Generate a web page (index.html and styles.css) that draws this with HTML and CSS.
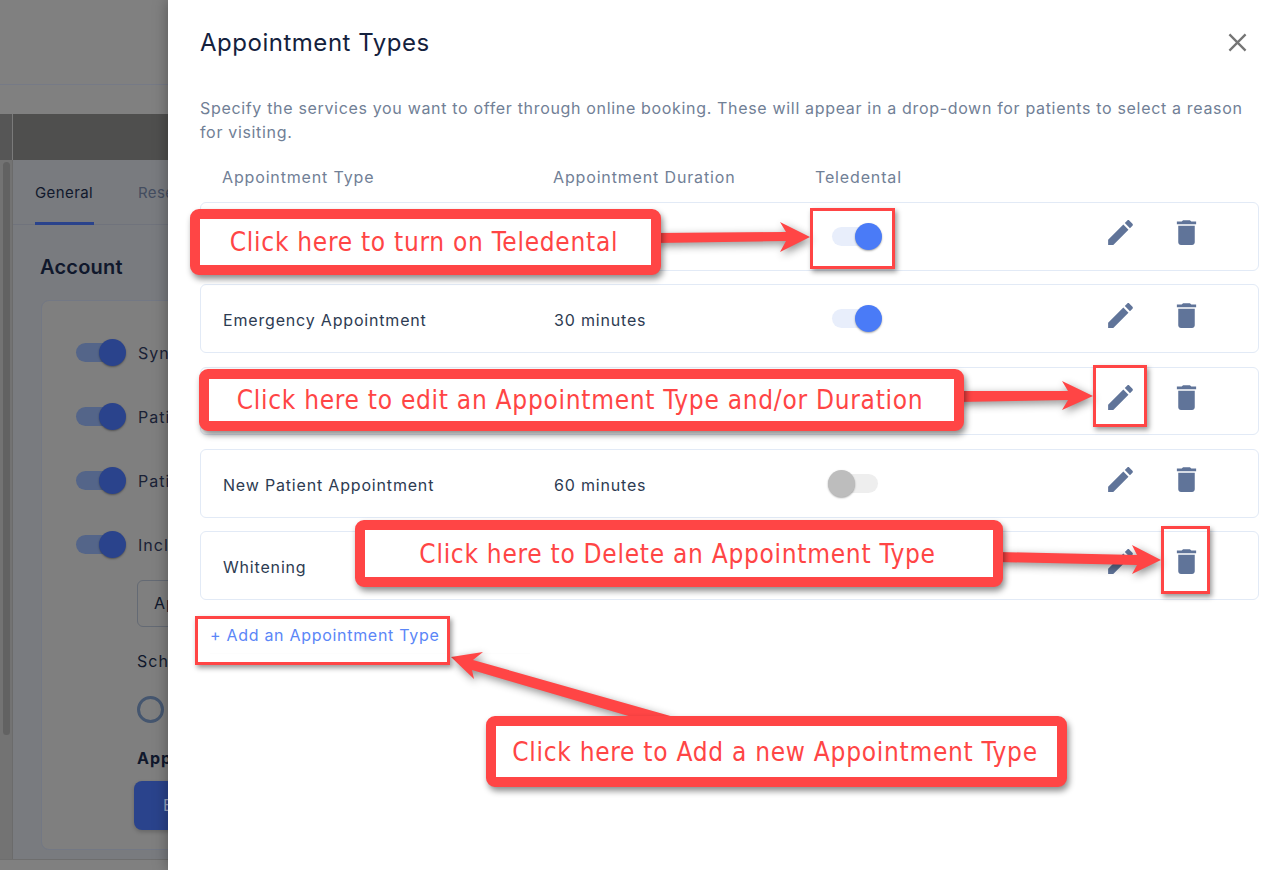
FILE: index.html
```html
<!DOCTYPE html>
<html lang="en">
<head>
<meta charset="utf-8">
<title>Appointment Types</title>
<link rel="stylesheet" href="styles.css">
</head>
<body>
<div class="page">
  <div class="backdrop" aria-hidden="true">
    <div class="bg-head"></div>
    <div class="bg-strip"></div>
    <div class="bg-bar"><div class="bg-bar-rail"></div></div>
    <div class="bg-main">
      <div class="bg-rail"><div class="bg-thumb"></div></div>
      <div class="bg-content">
        <div class="bg-tabs">
          <span class="bg-tab bg-tab-active">General</span>
          <span class="bg-tab">Reservations</span>
        </div>
        <div class="bg-section">Account</div>
        <div class="bg-card">
          <div class="bg-setting"><span class="bg-switch"></span><span>Sync appointments</span></div>
          <div class="bg-setting"><span class="bg-switch"></span><span>Patient reminders</span></div>
          <div class="bg-setting"><span class="bg-switch"></span><span>Patient forms</span></div>
          <div class="bg-setting"><span class="bg-switch"></span><span>Include</span></div>
          <div class="bg-input">Appointment</div>
          <div class="bg-label">Schedule</div>
          <div class="bg-radio"></div>
          <div class="bg-strong">Appointment</div>
          <div class="bg-button">Edit</div>
        </div>
      </div>
    </div>
  </div>

  <main class="drawer">
    <header class="drawer-head">
      <h1 class="drawer-title">Appointment Types</h1>
      <svg class="close" viewBox="0 0 20 20"><path d="M1.5 1.5l17 17M18.500 1.500l-17 17"/></svg>
    </header>
    <p class="intro">Specify the services you want to offer through online booking. These will appear in a drop-down for patients to select a reason for visiting.</p>
    <div class="cols">
      <span class="col-name">Appointment Type</span>
      <span class="col-dur-head">Appointment Duration</span>
      <span>Teledental</span>
    </div>
    <div class="rows">
      <div class="row">
        <span class="col-name"></span><span class="col-dur"></span>
        <span class="toggle"></span>
        <svg class="icon icon-edit" viewBox="0 0 24 24"><path d="M3 17.250V21h3.750L17.810 9.940l-3.750-3.750L3 17.250zM20.710 7.040c.39-.39.39-1.020 0-1.410l-2.340-2.340c-.39-.39-1.020-.39-1.410 0l-1.830 1.830 3.750 3.750 1.830-1.830z"/></svg>
        <svg class="icon" viewBox="0 0 24 24"><path d="M6 19c0 1.100.9 2 2 2h8c1.100 0 2-.9 2-2V7H6v12zM19 4h-3.500l-1-1h-5l-1 1H5v2h14V4z"/></svg>
      </div>
      <div class="row">
        <span class="col-name">Emergency Appointment</span><span class="col-dur">30 minutes</span>
        <span class="toggle"></span>
        <svg class="icon icon-edit" viewBox="0 0 24 24"><path d="M3 17.250V21h3.750L17.810 9.940l-3.750-3.750L3 17.250zM20.710 7.040c.39-.39.39-1.020 0-1.410l-2.340-2.340c-.39-.39-1.020-.39-1.410 0l-1.830 1.830 3.750 3.750 1.830-1.830z"/></svg>
        <svg class="icon" viewBox="0 0 24 24"><path d="M6 19c0 1.100.9 2 2 2h8c1.100 0 2-.9 2-2V7H6v12zM19 4h-3.500l-1-1h-5l-1 1H5v2h14V4z"/></svg>
      </div>
      <div class="row">
        <span class="col-name"></span><span class="col-dur"></span>
        <span class="toggle"></span>
        <svg class="icon icon-edit" viewBox="0 0 24 24"><path d="M3 17.250V21h3.750L17.810 9.940l-3.750-3.750L3 17.250zM20.710 7.040c.39-.39.39-1.020 0-1.410l-2.340-2.340c-.39-.39-1.020-.39-1.410 0l-1.830 1.830 3.750 3.750 1.830-1.830z"/></svg>
        <svg class="icon" viewBox="0 0 24 24"><path d="M6 19c0 1.100.9 2 2 2h8c1.100 0 2-.9 2-2V7H6v12zM19 4h-3.500l-1-1h-5l-1 1H5v2h14V4z"/></svg>
      </div>
      <div class="row">
        <span class="col-name">New Patient Appointment</span><span class="col-dur">60 minutes</span>
        <span class="toggle toggle-off"></span>
        <svg class="icon icon-edit" viewBox="0 0 24 24"><path d="M3 17.250V21h3.750L17.810 9.940l-3.750-3.750L3 17.250zM20.710 7.040c.39-.39.39-1.020 0-1.410l-2.340-2.340c-.39-.39-1.020-.39-1.410 0l-1.830 1.830 3.750 3.750 1.830-1.830z"/></svg>
        <svg class="icon" viewBox="0 0 24 24"><path d="M6 19c0 1.100.9 2 2 2h8c1.100 0 2-.9 2-2V7H6v12zM19 4h-3.500l-1-1h-5l-1 1H5v2h14V4z"/></svg>
      </div>
      <div class="row">
        <span class="col-name">Whitening</span><span class="col-dur"></span>
        <span class="toggle"></span>
        <svg class="icon icon-edit" viewBox="0 0 24 24"><path d="M3 17.250V21h3.750L17.810 9.940l-3.750-3.750L3 17.250zM20.710 7.040c.39-.39.39-1.020 0-1.410l-2.340-2.340c-.39-.39-1.020-.39-1.410 0l-1.830 1.830 3.750 3.750 1.830-1.830z"/></svg>
        <svg class="icon" viewBox="0 0 24 24"><path d="M6 19c0 1.100.9 2 2 2h8c1.100 0 2-.9 2-2V7H6v12zM19 4h-3.500l-1-1h-5l-1 1H5v2h14V4z"/></svg>
      </div>
    </div>
    <a class="add-link">+ Add an Appointment Type</a>
  </main>

  <svg class="arrows" viewBox="0 0 1284 870">
    <path d="M655 233L786 232L780 222L810 237L780 252L786 241L655 243Z"/>
    <path d="M958 391L1068 391L1062 381L1093 396L1062 410L1068 400L958 402Z"/>
    <path d="M998 552L1137 555L1132 545L1161 560L1132 574L1137 565L998 562Z"/>
    <path d="M451 657L483 652L473 660L674 717L632 717L472 670L474 679Z"/>
  </svg>

  <div class="mark mark-toggle"></div>
  <div class="mark mark-edit"></div>
  <div class="mark mark-trash"></div>
  <div class="mark mark-add"></div>

  <div class="callout callout-teledental">Click here to turn on Teledental</div>
  <div class="callout callout-edit">Click here to edit an Appointment Type and/or Duration</div>
  <div class="callout callout-delete">Click here to Delete an Appointment Type</div>
  <div class="callout callout-add">Click here to Add a new Appointment Type</div>
</div>
</body>
</html>
```

FILE: styles.css
```css
* { box-sizing: border-box; }
html, body { margin: 0; padding: 0; }
body { font-family: "Inter", "Noto Sans", sans-serif; background: #fff; }

.page { position: relative; display: flex; width: 1284px; height: 870px; overflow: hidden; }

/* dimmed application behind the drawer */
.backdrop { width: 168px; height: 870px; flex: none; overflow: hidden; display: flex; flex-direction: column; background: #808080; color: #10182c; }
.bg-head { height: 85px; flex: none; border-bottom: 1px solid #767a86; }
.bg-strip { height: 29px; flex: none; }
.bg-bar { height: 46px; flex: none; background: #4f4f4e; }
.bg-bar-rail { width: 13px; height: 100%; background: #565656; border-right: 1px solid #7a7a7a; }
.bg-main { height: 700px; flex: none; display: flex; border-bottom: 1px solid #6e6e6e; }
.bg-rail { width: 13px; flex: none; background: #737373; border-right: 1px solid #6b6b6b; padding: 2px 2px 0 3px; }
.bg-thumb { height: 573px; background: #626262; border-radius: 4px; }
.bg-content { width: 400px; flex: none; background: #797b7f; padding-left: 22px; }
.bg-tabs { display: flex; gap: 44px; height: 65px; margin-left: -22px; padding-left: 22px; border-bottom: 1px solid #70737c; font-size: 15px; letter-spacing: .4px; line-height: 65px; color: #444d60; }
.bg-tab { height: 65px; }
.bg-tab-active { color: #10182c; border-bottom: 3px solid #2a438c; width: 59px; white-space: nowrap; }
.bg-section { margin: 28px 0 0 5px; font-size: 20px; line-height: 28px; font-weight: 600; letter-spacing: .2px; }
.bg-card { margin: 19px 0 0 6px; width: 400px; height: 550px; background: #7f7f7f; border: 1px solid #737884; border-radius: 8px; padding: 38px 0 0 34px; font-size: 16px; letter-spacing: 1px; }
.bg-setting { display: flex; align-items: center; gap: 12px; height: 27px; margin-bottom: 37px; white-space: nowrap; color: #1a2236; }
.bg-switch { position: relative; width: 44px; height: 19px; border-radius: 10px; background: #546589; flex: none; margin-right: 6px; }
.bg-switch::after { content: ""; position: absolute; right: -6px; top: -4px; width: 27px; height: 27px; border-radius: 50%; background: #2a438c; box-shadow: 0 1px 2px rgba(0,0,0,.35); }
.bg-input { margin: -15px 0 0 61px; width: 200px; height: 47px; border: 1px solid #646a74; border-radius: 6px; padding-left: 16px; line-height: 45px; white-space: nowrap; }
.bg-label { margin: 23px 0 0 61px; line-height: 22px; white-space: nowrap; }
.bg-radio { margin: 24px 0 0 61px; width: 27px; height: 27px; border: 3px solid #45566f; border-radius: 50%; }
.bg-strong { margin: 24px 0 0 61px; line-height: 22px; font-weight: 700; white-space: nowrap; }
.bg-button { margin: 12px 0 0 58px; width: 120px; height: 49px; border-radius: 8px; background: #2a438c; color: #9aa5c0; padding-left: 29px; line-height: 49px; box-shadow: 0 2px 4px rgba(0,0,0,.2); }

/* drawer */
.drawer { flex: 1; height: 870px; background: #fff; padding: 0 25px 0 32px; box-shadow: 0 0 14px rgba(0,0,0,.35); position: relative; }
.drawer-head { display: flex; justify-content: space-between; align-items: center; height: 84px; }
.drawer-title { margin: 0; font-size: 24px; font-weight: 400; letter-spacing: .52px; color: #14213d; }
.close { width: 19px; height: 19px; fill: none; stroke: #757575; stroke-width: 2.4; margin-right: 12px; }
.intro { margin: 12px 0 0; font-size: 16px; line-height: 24px; letter-spacing: .67px; color: #718096; width: 1050px; }
.cols { display: flex; align-items: center; height: 24px; margin-top: 21px; padding-left: 22px; font-size: 16px; letter-spacing: .85px; color: #718096; }
.col-dur-head { width: 262px; flex: none; }
.rows { display: flex; flex-direction: column; gap: 13.500px; margin-top: 13px; }
.row { display: flex; align-items: center; height: 68.750px; border: 1px solid #e2eaf6; border-radius: 6px; padding-left: 22px; font-size: 16px; letter-spacing: .82px; color: #2d3b52; }
.col-name { width: 331px; flex: none; padding-top: 3px; }
.cols .col-name { padding-top: 0; }
.col-dur { width: 278px; flex: none; padding-top: 3px; }
.toggle { position: relative; width: 44px; height: 19px; border-radius: 10px; background: #e8eefb; flex: none; margin-right: 228px; }
.toggle::after { content: ""; position: absolute; right: -6px; top: -4px; width: 27px; height: 27px; border-radius: 50%; background: #4a7bf7; box-shadow: 0 1px 2px rgba(0,0,0,.35); }
.toggle-off { background: #eeeeee; width: 50px; margin-left: -4px; margin-right: 226px; }
.toggle-off::after { right: auto; left: 0; background: #bdbdbd; }
.icon { width: 33px; height: 33px; fill: #607499; flex: none; margin-top: -7px; }
.icon-edit { margin-right: 33px; }
.add-link { display: block; width: 320px; margin: 23px 0 0 10px; padding-bottom: 6px; border-bottom: 1px solid #fdfdfd; font-size: 16px; letter-spacing: .7px; color: #5b86f7; line-height: 24px; }

/* annotation layer */
.arrows { position: absolute; left: 0; top: 0; width: 1284px; height: 870px; fill: #ff4545; filter: drop-shadow(2px 3px 4px rgba(0,0,0,.45)); }
.mark { position: absolute; border: 3px solid #ff4545; box-shadow: 2px 3px 5px rgba(0,0,0,.4); }
.mark-toggle { left: 810px; top: 208px; width: 85px; height: 61px; }
.mark-edit { left: 1093px; top: 365px; width: 54px; height: 62px; }
.mark-trash { left: 1161px; top: 526px; width: 49px; height: 68px; }
.mark-add { left: 195px; top: 616px; width: 255px; height: 49px; }
.callout { position: absolute; display: flex; align-items: center; justify-content: center; background: #fff; border: 10px solid #ff4545; border-radius: 9px; box-shadow: 2px 4px 6px rgba(0,0,0,.45); font-family: "DejaVu Sans", sans-serif; font-stretch: condensed; font-size: 26px; letter-spacing: .72px; padding-right: 3px; color: #ff4545; white-space: nowrap; }
.callout-teledental { left: 190px; top: 209px; width: 471px; height: 66px; }
.callout-edit { left: 199px; top: 369px; width: 765px; height: 62px; }
.callout-delete { left: 355px; top: 520px; width: 648px; height: 67px; }
.callout-add { left: 486px; top: 716px; width: 581px; height: 71px; }
```
